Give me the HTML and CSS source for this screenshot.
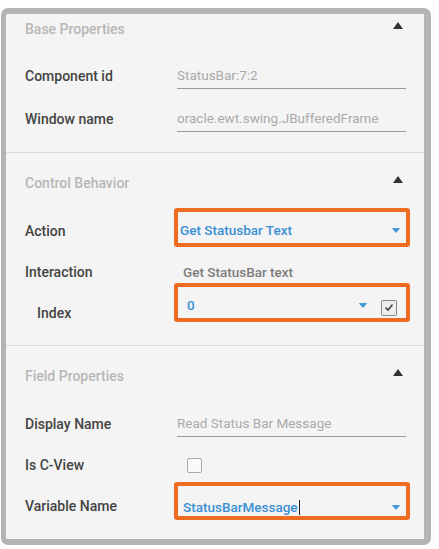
FILE: index.html
```html
<!DOCTYPE html>
<html>
<head>
<meta charset="utf-8">
<link rel="stylesheet" href="styles.css">
</head>
<body>
<div class="panel">
  <section class="sec sec-first">
    <div class="sec-head"><span class="sec-title">Base Properties</span><span class="tri"></span></div>
    <div class="row r43"><span class="label">Component id</span><div class="line"><span class="ph">StatusBar:7:2</span></div></div>
    <div class="row r43"><span class="label">Window name</span><div class="line"><span class="ph">oracle.ewt.swing.JBufferedFrame</span></div></div>
  </section>
  <section class="sec">
    <div class="sec-head"><span class="sec-title">Control Behavior</span><span class="tri"></span></div>
    <div class="row"><span class="label">Action</span>
      <div class="box box-action"><span class="val">Get Statusbar Text</span><svg class="caret" width="8" height="5" viewBox="0 0 8 5"><path d="M0.5 0.5 H7.5 L4 4.5 Z" fill="#3b95d6" stroke="#3b95d6" stroke-width="0.8" stroke-linejoin="round"/></svg></div>
    </div>
    <div class="row"><span class="label">Interaction</span><span class="plain">Get StatusBar text</span></div>
    <div class="row"><span class="label indent">Index</span>
      <div class="box box-index"><span class="val">0</span><svg class="caret" width="8" height="5" viewBox="0 0 8 5"><path d="M0.5 0.5 H7.5 L4 4.5 Z" fill="#3b95d6" stroke="#3b95d6" stroke-width="0.8" stroke-linejoin="round"/></svg><span class="chk checked"><svg width="10" height="9" viewBox="0 0 10 9"><path d="M1.5 4.5 L4 7 L8.5 1.5" fill="none" stroke="#444" stroke-width="1.6"/></svg></span></div>
    </div>
  </section>
  <section class="sec">
    <div class="sec-head"><span class="sec-title">Field Properties</span><span class="tri"></span></div>
    <div class="row"><span class="label">Display Name</span><div class="line"><span class="ph">Read Status Bar Message</span></div></div>
    <div class="row"><span class="label">Is C-View</span><div class="cview"><span class="chk"></span></div></div>
    <div class="row"><span class="label">Variable Name</span>
      <div class="box box-var"><span class="val">StatusBarMessage<span class="cursor"></span></span><svg class="caret" width="8" height="5" viewBox="0 0 8 5"><path d="M0.5 0.5 H7.5 L4 4.5 Z" fill="#3b95d6" stroke="#3b95d6" stroke-width="0.8" stroke-linejoin="round"/></svg></div>
    </div>
  </section>
</div>
</body>
</html>
```
FILE: styles.css
```css
* { box-sizing: border-box; }
html, body { margin: 0; padding: 0; background: #ffffff; }
body { font-family: Roboto, "Noto Sans", Arial, sans-serif; }

.panel {
  margin: 8px 0 0 1px;
  width: 430px;
  height: 537px;
  border-style: solid;
  border-color: #b4b4b4;
  border-width: 6px 7px 6px 5px;
  border-radius: 7px;
  background: #f4f4f4;
  overflow: hidden;
}

.sec {
  padding: 15px 14px 12px 19px;
  border-top: 1px solid #dadada;
}
.sec-first { padding-top: 0; border-top: 0; }

.sec-head {
  height: 30px;
  display: flex;
  align-items: center;
  justify-content: space-between;
  padding-right: 7px;
  margin-bottom: 12px;
}
.sec-first .sec-head { margin-bottom: 10px; }

.sec-title {
  font-size: 14px;
  font-weight: 500;
  color: #b7b7b7;
}
.tri {
  width: 0; height: 0;
  border-left: 5.5px solid transparent;
  border-right: 5.5px solid transparent;
  border-bottom: 7px solid #333;
  margin-bottom: 8px;
}

.row {
  height: 41px;
  display: grid;
  grid-template-columns: 149px 1fr;
  align-items: center;
}
.r43 { height: 43px; }

.label {
  font-size: 14px;
  font-weight: 500;
  color: #444444;
}
.indent { padding-left: 12px; padding-top: 1px; }

.line {
  height: 26px;
  margin: 0 4px 0 3px;
  border-bottom: 1px solid #9c9c9c;
  display: flex;
  align-items: center;
}
.ph {
  font-size: 13.5px;
  color: #aaaaaa;
}

.plain {
  font-size: 13.5px;
  font-weight: 500;
  color: #7d7d7d;
  padding-left: 9px;
}

.box {
  align-self: start;
  height: 39px;
  border: 4px solid #ee6c22;
  border-radius: 3px;
  display: flex;
  align-items: center;
  padding: 5px 6px 0 2px;
}
.box-action { margin-top: -2px; }
.box-index { margin-top: -9px; padding-left: 9px; padding-right: 9px; }
.box-var { margin-top: -3px; height: 38px; padding-top: 12px; padding-left: 5px; }

.val {
  flex: 1;
  font-size: 13.5px;
  font-weight: 500;
  color: #3a8fd4;
  display: flex;
  align-items: center;
}
.cursor {
  display: inline-block;
  width: 1px;
  height: 15px;
  background: #222;
  margin-left: 1px;
}
.caret { display: block; }

.chk {
  width: 15px;
  height: 15px;
  border: 1px solid #a9a9a9;
  border-radius: 2px;
  background: #fafafa;
  display: flex;
  align-items: center;
  justify-content: center;
}
.checked {
  width: 16px;
  height: 16px;
  border-color: #8a8a8a;
  background: #eeeeee;
  margin-left: 14px;
  margin-top: 5px;
}
.cview { padding-left: 13px; padding-top: 1px; }
```
